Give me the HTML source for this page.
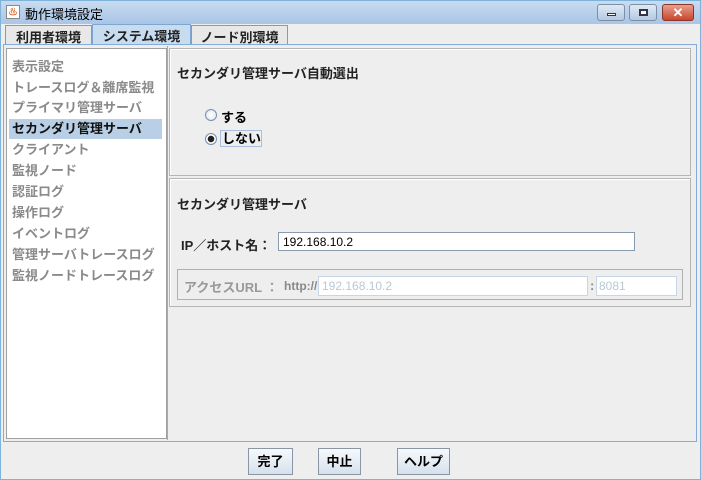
<html><head><style>
*{margin:0;padding:0;box-sizing:border-box}
body{width:701px;height:480px;background:#fff;font-family:"Liberation Sans","Noto Sans CJK JP",sans-serif;font-size:13px;position:relative;overflow:hidden}
.a{position:absolute}
.win{left:0;top:0;width:701px;height:480px;background:#eeeeee;border:1px solid #7fb2d8}
.title{left:1px;top:1px;width:699px;height:23px;background:linear-gradient(#c9dcf0,#a9c5e6)}
.tab{top:25px;height:20px;border:1px solid #8a9aa8;border-bottom:none;background:#e8e8e8;font-weight:bold;font-size:13px;padding:1px 0 0 0;text-align:center;color:#222}
.li{left:12px;font-size:13px;color:#8a8a8a;font-weight:bold;height:21px;line-height:21px}
.grp{border:1px solid #b5b5b5;box-shadow:inset 1px 1px 0 #fff}
.btn{top:448px;height:27px;border:1px solid #8a96a4;background:linear-gradient(#f6f9fc,#d6e1ec);font-weight:bold;text-align:center;line-height:25px;font-size:13px}
</style></head><body>
<div class="a win"></div>
<div class="a title"></div>
<div class="a" style="left:6px;top:5px;width:14px;height:14px;border:1px solid #888;background:#fff;font-size:9px;color:#c40;text-align:center;line-height:12px">♨</div>
<div class="a" style="left:25px;top:4px;font-size:13px;color:#000">動作環境設定</div>
<div class="a" style="left:597px;top:4px;width:28px;height:17px;border:1px solid #7c8ea8;border-radius:3px;background:linear-gradient(#dfe9f5,#b4c9e2)"><div class="a" style="left:9px;top:8px;width:9px;height:3px;border:1px solid #334;background:#fff"></div></div>
<div class="a" style="left:629px;top:4px;width:28px;height:17px;border:1px solid #7c8ea8;border-radius:3px;background:linear-gradient(#dfe9f5,#b4c9e2)"><div class="a" style="left:9px;top:4px;width:9px;height:7px;border:2px solid #334;background:#fff"></div></div>
<div class="a" style="left:662px;top:4px;width:32px;height:17px;border:1px solid #8a3528;border-radius:3px;background:linear-gradient(#e8a08e,#c9462c);color:#fff;font-weight:bold;text-align:center;line-height:15px;font-size:13px">✕</div>
<div class="a tab" style="left:5px;width:87px">利用者環境</div>
<div class="a tab" style="left:92px;width:99px;top:24px;height:21px;background:#c8dcf0;border-color:#7fa6d2">システム環境</div>
<div class="a tab" style="left:191px;width:97px">ノード別環境</div>
<div class="a" style="left:3px;top:44px;width:694px;height:398px;border:1px solid #85abd8;background:#eee"></div>
<div class="a" style="left:6px;top:48px;width:161px;height:391px;background:#fff;border:1px solid #a0a0a0"></div>
<div class="a" style="left:9px;top:119px;width:153px;height:20px;background:#b8cfe5"></div>
<div class="a li" style="top:56px">表示設定</div>
<div class="a li" style="top:77px">トレースログ＆離席監視</div>
<div class="a li" style="top:97px">プライマリ管理サーバ</div>
<div class="a li" style="top:118px;color:#111">セカンダリ管理サーバ</div>
<div class="a li" style="top:139px">クライアント</div>
<div class="a li" style="top:160px">監視ノード</div>
<div class="a li" style="top:181px">認証ログ</div>
<div class="a li" style="top:202px">操作ログ</div>
<div class="a li" style="top:223px">イベントログ</div>
<div class="a li" style="top:244px">管理サーバトレースログ</div>
<div class="a li" style="top:265px">監視ノードトレースログ</div>
<div class="a" style="left:167px;top:46px;width:527px;height:394px;border-left:1px solid #aaa"></div>
<div class="a grp" style="left:169px;top:48px;width:522px;height:128px"></div>
<div class="a" style="left:177px;top:63px;font-weight:bold;color:#222">セカンダリ管理サーバ自動選出</div>
<div class="a" style="left:205px;top:109px;width:12px;height:12px;border:1px solid #7a8ea8;border-radius:50%;background:radial-gradient(#fff,#dbe4ee)"></div>
<div class="a" style="left:221px;top:107px;font-weight:bold">する</div>
<div class="a" style="left:205px;top:133px;width:12px;height:12px;border:1px solid #7a8ea8;border-radius:50%;background:radial-gradient(#222 0 3px,#fff 3.5px,#dbe4ee)"></div>
<div class="a" style="left:220px;top:130px;width:42px;height:17px;border:1px solid #a9c0dc;font-weight:bold;padding-left:1px;line-height:15px">しない</div>
<div class="a grp" style="left:169px;top:178px;width:522px;height:129px"></div>
<div class="a" style="left:177px;top:194px;font-weight:bold;color:#222">セカンダリ管理サーバ</div>
<div class="a" style="left:181px;top:235px;font-weight:bold;color:#222">IP／ホスト名：</div>
<div class="a" style="left:278px;top:232px;width:357px;height:19px;border:1px solid #8a9aae;background:#fff;padding:2px 0 0 4px;font-size:12px">192.168.10.2</div>
<div class="a" style="left:177px;top:269px;width:506px;height:31px;border:1px solid #b0b0b0"></div>
<div class="a" style="left:184px;top:277px;font-weight:bold;color:#999">アクセスURL ：</div>
<div class="a" style="left:284px;top:279px;font-weight:bold;color:#888;font-size:12px">http://</div>
<div class="a" style="left:318px;top:276px;width:270px;height:20px;border:1px solid #c6d6e6;background:#fff;color:#b8c8d8;padding:2px 0 0 3px;font-size:12px">192.168.10.2</div>
<div class="a" style="left:590px;top:278px;font-weight:bold;color:#888">:</div>
<div class="a" style="left:596px;top:276px;width:81px;height:20px;border:1px solid #c6d6e6;background:#fff;color:#b8c8d8;padding:2px 0 0 2px;font-size:12px">8081</div>
<div class="a btn" style="left:248px;width:45px">完了</div>
<div class="a btn" style="left:318px;width:43px">中止</div>
<div class="a btn" style="left:397px;width:53px">ヘルプ</div>
</body></html>
